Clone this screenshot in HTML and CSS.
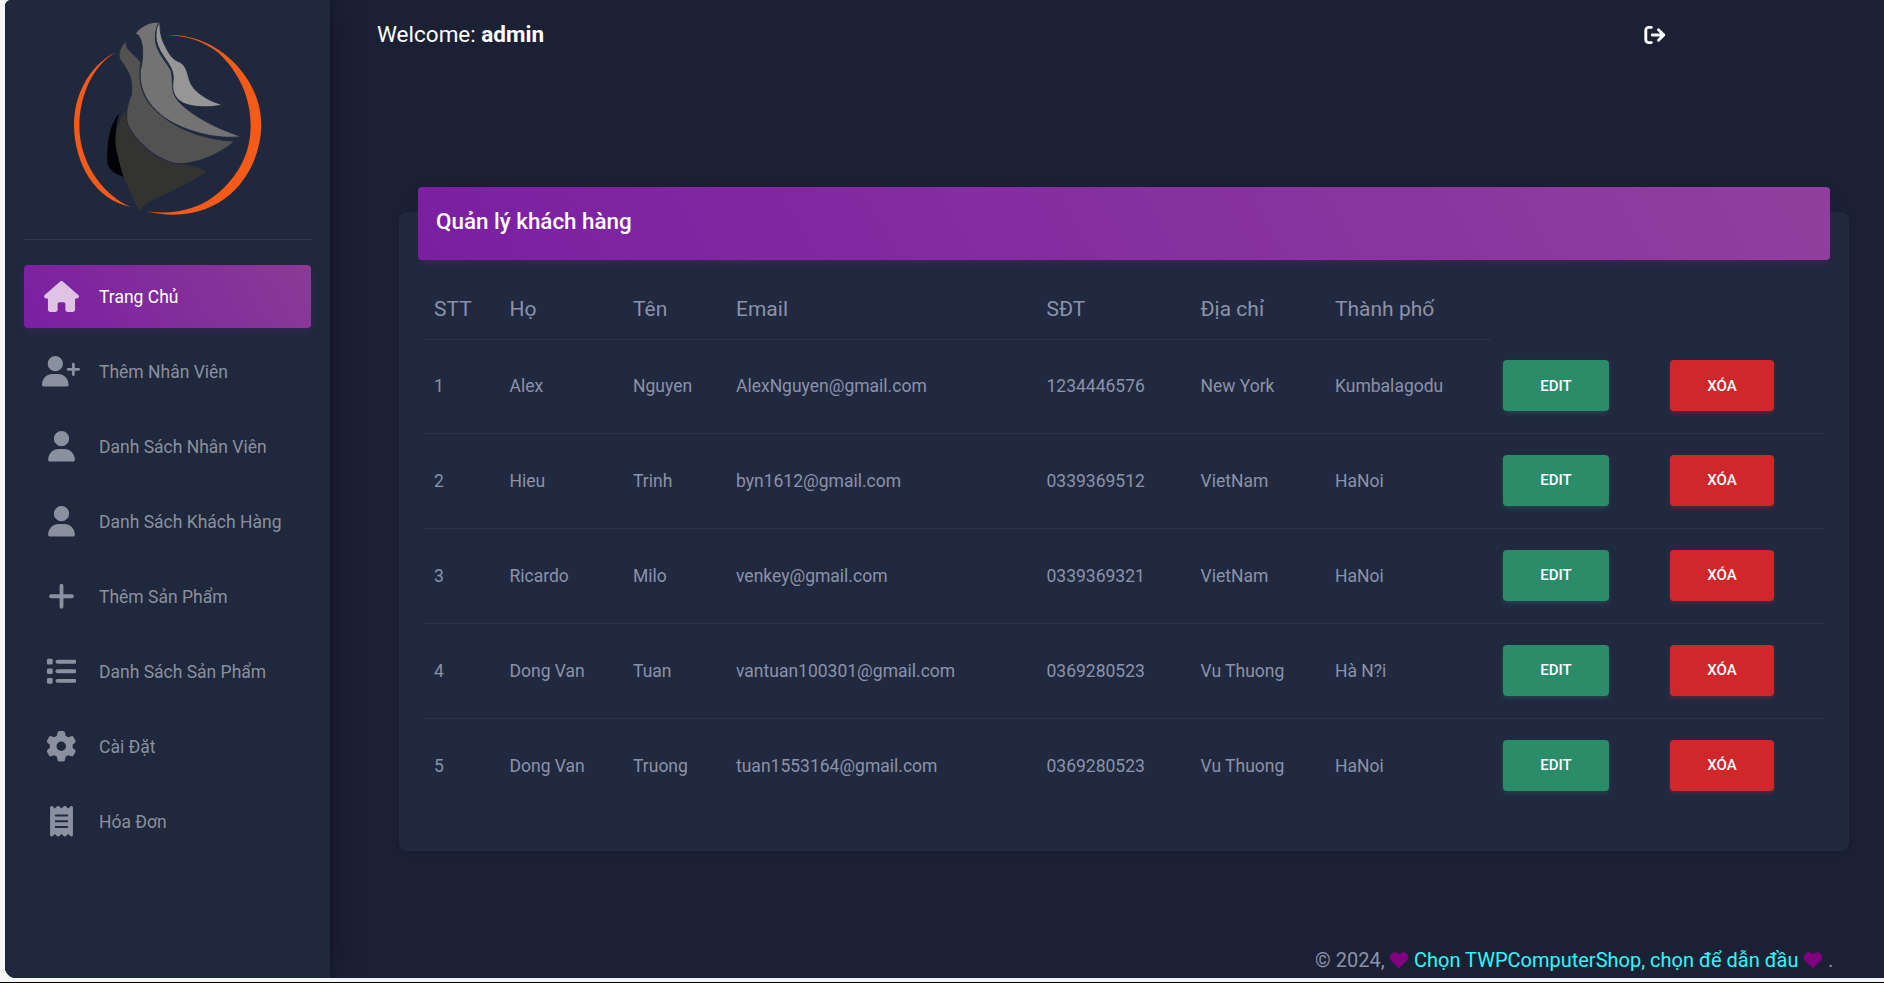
FILE: index.html
```html
<!DOCTYPE html>
<html lang="vi">
<head>
<meta charset="utf-8">
<title>Quản lý khách hàng</title>
<link rel="stylesheet" href="styles.css">
</head>
<body>
<div class="app">
  <aside class="sidebar">
    <div class="brand">
      <svg class="logo" viewBox="200 50 600 610">
        <path fill="#f45a18" d="M498 104C560 101 640 122 705 190C760 250 783 310 783 378C781 455 748 530 690 582C630 635 540 658 438 633C520 645 600 628 660 573C722 515 751 450 751 376C751 290 715 215 655 158C610 122 560 106 498 104Z"/>
        <path fill="#f45a18" d="M347 156C280 186 221 270 221 375C222 490 285 600 392 620C320 592 238 500 237 378C238 275 285 190 347 156Z"/>
        <path fill="#010205" d="M357 338C330 370 318 420 321 486C325 510 345 522 369 530L347 440C343 400 348 370 357 338Z"/>
        <path fill="#333332" d="M372 330C345 385 340 420 352 465C365 530 390 575 416 631C430 615 445 606 470 593C510 573 570 548 618 515C595 500 575 494 530 490C460 480 385 405 378 355Z"/>
        <path fill="#525252" stroke="#242b40" stroke-width="3" d="M376 122L380 142C395 162 412 170 421 187C415 235 422 270 440 300C475 350 560 415 702 423C660 460 590 492 530 490C460 478 395 410 380 365C375 335 385 300 393 285C398 240 388 215 362 182C350 165 357 145 376 122Z"/>
        <path fill="#737373" stroke="#242b40" stroke-width="3" d="M405 100C420 78 450 63 477 66C465 85 462 110 468 135C477 165 498 185 512 210C520 240 510 275 532 300C570 345 650 385 724 409C650 418 560 395 500 357C445 320 415 270 420 210C432 165 428 120 413 104Z"/>
        <path fill="#969696" stroke="#242b40" stroke-width="3" d="M479 66C478 90 482 115 495 138C508 165 520 180 540 186C575 210 550 250 605 285C625 300 645 306 667 314C630 322 580 322 550 309C515 290 515 265 519 235C520 190 478 170 468 120C465 95 469 75 479 66Z"/>
      </svg>
    </div>
    <nav class="menu">
      <a class="item active"><span class="ico"><svg viewBox="0 0 576 512" width="35" height="31"><path d="M575.8 255.5c0 18-15 32.1-32 32.1h-32l.7 160.2c0 2.7-.2 5.4-.5 8.1V472c0 22.1-17.9 40-40 40H456c-1.100 0-2.200 0-3.300-.1c-1.400 .1-2.800 .1-4.200 .1H416 392c-22.100 0-40-17.900-40-40V448 384c0-17.700-14.300-32-32-32H256c-17.700 0-32 14.300-32 32v64 24c0 22.100-17.900 40-40 40H160 128.100c-1.500 0-3-.1-4.500-.2c-1.200 .1-2.400 .2-3.600 .2H104c-22.100 0-40-17.900-40-40V360c0-.9 0-1.900 .1-2.800V287.600H32c-18 0-32-14-32-32.100c0-9 3-17 10-24L266.400 8c7-7 15-8 22-8s15 2 21 7L564.800 231.500c8 7 12 15 11 24z"/></svg></span><span>Trang Chủ</span></a>
      <a class="item"><span class="ico"><svg viewBox="0 0 640 512" width="38" height="30.500"><path d="M96 128a128 128 0 1 1 256 0A128 128 0 1 1 96 128zM0 482.300C0 383.800 79.800 304 178.300 304h91.400C368.200 304 448 383.800 448 482.300c0 16.400-13.300 29.700-29.700 29.700H29.700C13.300 512 0 498.700 0 482.300zM504 312V248H440c-13.300 0-24-10.700-24-24s10.700-24 24-24h64V136c0-13.300 10.700-24 24-24s24 10.700 24 24v64h64c13.300 0 24 10.700 24 24s-10.700 24-24 24H552v64c0 13.300-10.700 24-24 24s-24-10.700-24-24z"/></svg></span><span>Thêm Nhân Viên</span></a>
      <a class="item"><span class="ico"><svg viewBox="0 0 448 512" width="27" height="30.500"><path d="M224 256A128 128 0 1 0 224 0a128 128 0 1 0 0 256zm-45.700 48C79.800 304 0 383.800 0 482.300C0 498.700 13.300 512 29.700 512H418.300c16.400 0 29.700-13.300 29.700-29.700C448 383.800 368.200 304 269.700 304H178.300z"/></svg></span><span>Danh Sách Nhân Viên</span></a>
      <a class="item"><span class="ico"><svg viewBox="0 0 448 512" width="27" height="30.500"><path d="M224 256A128 128 0 1 0 224 0a128 128 0 1 0 0 256zm-45.700 48C79.800 304 0 383.800 0 482.300C0 498.700 13.300 512 29.700 512H418.300c16.400 0 29.700-13.300 29.700-29.700C448 383.800 368.200 304 269.700 304H178.300z"/></svg></span><span>Danh Sách Khách Hàng</span></a>
      <a class="item"><span class="ico"><svg viewBox="0 0 448 512" width="27" height="30.500"><path d="M256 80c0-17.700-14.300-32-32-32s-32 14.300-32 32V224H48c-17.700 0-32 14.300-32 32s14.300 32 32 32H192V432c0 17.700 14.300 32 32 32s32-14.300 32-32V288H400c17.700 0 32-14.300 32-32s-14.300-32-32-32H256V80z"/></svg></span><span>Thêm Sản Phẩm</span></a>
      <a class="item"><span class="ico"><svg viewBox="0 0 512 512" width="30.500" height="30.500"><rect x="16" y="48" width="96" height="96" rx="24"/><rect x="16" y="208" width="96" height="96" rx="24"/><rect x="16" y="368" width="96" height="96" rx="24"/><rect x="160" y="64" width="352" height="64" rx="32"/><rect x="160" y="224" width="352" height="64" rx="32"/><rect x="160" y="384" width="352" height="64" rx="32"/></svg></span><span>Danh Sách Sản Phẩm</span></a>
      <a class="item"><span class="ico"><svg viewBox="0 0 512 512" width="30.500" height="30.500"><path d="M495.900 166.600c3.200 8.700 .5 18.400-6.400 24.600l-43.300 39.400c1.100 8.300 1.700 16.800 1.700 25.400s-.6 17.100-1.700 25.400l43.300 39.400c6.900 6.200 9.600 15.900 6.400 24.600c-4.400 11.900-9.700 23.300-15.800 34.300l-4.700 8.100c-6.600 11-14 21.400-22.100 31.200c-5.900 7.200-15.700 9.600-24.500 6.800l-55.700-17.700c-13.400 10.300-28.200 18.900-44 25.400l-12.500 57.100c-2 9.100-9 16.300-18.200 17.800c-13.800 2.300-28 3.500-42.500 3.500s-28.700-1.200-42.500-3.500c-9.200-1.500-16.200-8.700-18.200-17.800l-12.500-57.100c-15.800-6.500-30.600-15.100-44-25.400L83.100 425.900c-8.800 2.800-18.600 .3-24.500-6.800c-8.100-9.800-15.500-20.200-22.100-31.200l-4.700-8.100c-6.100-11-11.400-22.400-15.800-34.300c-3.200-8.700-.5-18.400 6.400-24.600l43.300-39.400C64.600 273.100 64 264.600 64 256s.6-17.100 1.700-25.400L22.400 191.200c-6.900-6.200-9.600-15.900-6.400-24.600c4.400-11.900 9.700-23.300 15.800-34.300l4.700-8.100c6.600-11 14-21.400 22.100-31.200c5.900-7.200 15.700-9.600 24.500-6.800l55.700 17.700c13.400-10.300 28.200-18.900 44-25.400l12.500-57.100c2-9.100 9-16.300 18.200-17.800C227.300 1.200 241.500 0 256 0s28.700 1.200 42.500 3.500c9.200 1.500 16.200 8.700 18.200 17.800l12.500 57.100c15.800 6.500 30.600 15.100 44 25.400l55.700-17.700c8.800-2.800 18.600-.3 24.500 6.800c8.100 9.800 15.500 20.200 22.100 31.200l4.700 8.100c6.100 11 11.400 22.400 15.800 34.300zM256 336a80 80 0 1 0 0-160 80 80 0 1 0 0 160z"/></svg></span><span>Cài Đặt</span></a>
      <a class="item"><span class="ico"><svg viewBox="0 0 384 512" width="23" height="30.500"><path d="M14 2.200C22.500-1.700 32.500-.3 39.600 5.800L80 40.400 120.400 5.800c9-7.700 22.300-7.700 31.200 0L192 40.400 232.400 5.800c9-7.700 22.300-7.700 31.200 0L304 40.400 344.400 5.800c7.100-6.100 17.100-7.500 25.600-3.600s14 12.400 14 21.800V488c0 9.400-5.500 17.900-14 21.800s-18.500 2.500-25.600-3.600L304 471.600l-40.400 34.600c-9 7.700-22.300 7.700-31.200 0L192 471.600l-40.400 34.600c-9 7.700-22.300 7.700-31.200 0L80 471.600 39.600 506.200c-7.100 6.100-17.100 7.500-25.600 3.600S0 497.400 0 488V24C0 14.600 5.500 6.100 14 2.200zM96 144c-8.800 0-16 7.200-16 16s7.200 16 16 16H288c8.800 0 16-7.200 16-16s-7.200-16-16-16H96zM80 352c0 8.800 7.200 16 16 16H288c8.800 0 16-7.200 16-16s-7.200-16-16-16H96c-8.800 0-16 7.200-16 16zM96 240c-8.800 0-16 7.200-16 16s7.200 16 16 16H288c8.800 0 16-7.200 16-16s-7.200-16-16-16H96z"/></svg></span><span>Hóa Đơn</span></a>
    </nav>
  </aside>

  <main class="main">
    <header class="topbar">
      <div class="welcome">Welcome: <b>admin</b></div>
      <a class="logout"><svg viewBox="0 0 22 20" width="22" height="20"><path fill="none" stroke="#fff" stroke-width="2.900" stroke-linecap="round" stroke-linejoin="round" d="M7.300 2.400H4.600a2.800 2.800 0 0 0-2.800 2.800v9.600a2.800 2.800 0 0 0 2.800 2.800h2.700M8.300 10h11.500M14.500 4.800 19.800 10l-5.300 5.200"/></svg></a>
    </header>

    <section class="card">
      <h4 class="card-header">Quản lý khách hàng</h4>
      <table class="table">
        <colgroup><col class="c1"><col class="c2"><col class="c3"><col class="c4"><col class="c5"><col class="c6"><col class="c7"><col class="c8"><col class="c9"></colgroup>
        <thead><tr><th>STT</th><th>Họ</th><th>Tên</th><th>Email</th><th>SĐT</th><th>Địa chỉ</th><th>Thành phố</th></tr></thead>
        <tbody>
          <tr><td>1</td><td>Alex</td><td>Nguyen</td><td>AlexNguyen@gmail.com</td><td>1234446576</td><td>New York</td><td>Kumbalagodu</td><td><a class="btn edit">EDIT</a></td><td><a class="btn del">XÓA</a></td></tr>
          <tr><td>2</td><td>Hieu</td><td>Trinh</td><td>byn1612@gmail.com</td><td>0339369512</td><td>VietNam</td><td>HaNoi</td><td><a class="btn edit">EDIT</a></td><td><a class="btn del">XÓA</a></td></tr>
          <tr><td>3</td><td>Ricardo</td><td>Milo</td><td>venkey@gmail.com</td><td>0339369321</td><td>VietNam</td><td>HaNoi</td><td><a class="btn edit">EDIT</a></td><td><a class="btn del">XÓA</a></td></tr>
          <tr><td>4</td><td>Dong Van</td><td>Tuan</td><td>vantuan100301@gmail.com</td><td>0369280523</td><td>Vu Thuong</td><td>Hà N?i</td><td><a class="btn edit">EDIT</a></td><td><a class="btn del">XÓA</a></td></tr>
          <tr><td>5</td><td>Dong Van</td><td>Truong</td><td>tuan1553164@gmail.com</td><td>0369280523</td><td>Vu Thuong</td><td>HaNoi</td><td><a class="btn edit">EDIT</a></td><td><a class="btn del">XÓA</a></td></tr>
        </tbody>
      </table>
    </section>

    <footer class="footer">
      <span class="copy">© 2024,</span>
      <svg class="heart" viewBox="0 0 20 18"><path d="M10 17.500 1.700 9.300C-.2 7.300-.2 3.900 1.600 2 3.800-.3 7.600-.3 9.500 1.900L10 2.500l.5-.6C12.400-.3 16.200-.3 18.400 2c1.800 1.900 1.800 5.300-.1 7.300z"/></svg>
      <a class="slogan">Chọn TWPComputerShop, chọn để dẫn đầu</a>
      <svg class="heart" viewBox="0 0 20 18"><path d="M10 17.500 1.700 9.300C-.2 7.300-.2 3.900 1.600 2 3.800-.3 7.600-.3 9.500 1.900L10 2.500l.5-.6C12.400-.3 16.200-.3 18.400 2c1.800 1.900 1.800 5.300-.1 7.300z"/></svg>
      <span class="dot">.</span>
    </footer>
  </main>
</div>
</body>
</html>
```
FILE: styles.css
```css
* { box-sizing: border-box; }

body {
  margin: 0;
  height: 983px;
  padding-left: 5px;
  background: #f6f6f7;
  border-bottom: 1px solid #000;
  overflow: hidden;
  font-family: Roboto, "Noto Sans", sans-serif;
  color: #8b92a9;
}

.app {
  display: flex;
  height: 978px;
  background: #1b2035;
  border-radius: 6px 0 0 11px;
  overflow: hidden;
}

.sidebar {
  width: 325px;
  flex: none;
  background: #1f283c;
  box-shadow: 0 0 4px rgba(8, 10, 34, .5), 10px 0 30px -6px rgba(0, 0, 0, .3);
  z-index: 1;
}

.brand {
  height: 240px;
  margin: 0 18px 0 19px;
  padding: 16.700px 0 0 42.700px;
  border-bottom: 1px solid #30394f;
}
.logo { display: block; width: 200px; height: 203.300px; }

.menu {
  display: flex;
  flex-direction: column;
  gap: 12px;
  padding: 25px 19px 0;
}
.item {
  display: flex;
  align-items: center;
  gap: 19px;
  height: 63px;
  padding-left: 18px;
  border-radius: 4px;
  font-size: 17.500px;
  color: #8b909f;
}
.ico { display: flex; justify-content: center; width: 38px; }
.ico svg { fill: #8b90a1; }
.active {
  color: #fff;
  background: linear-gradient(60deg, #7b1fa2, #8b3a96);
  box-shadow: 0 4px 10px rgba(123, 31, 162, .22);
}
.active .ico svg { fill: #dec3e5; }

.main { flex: 1; display: flex; flex-direction: column; }

.topbar {
  display: flex;
  justify-content: space-between;
  align-items: center;
  height: 68px;
  padding: 0 218px 0 47px;
}
.welcome { font-size: 22.500px; color: #fff; }
.welcome b { font-weight: 700; }
.logout { display: flex; padding-top: 1px; }

.card {
  height: 639px;
  margin: 144px 35px 0 69px;
  padding: 0 19px;
  border-radius: 8px;
  background: #212940;
  box-shadow: 0 1px 5px rgba(0, 0, 0, .16);
}
.card-header {
  height: 73px;
  margin: -25px 0 0;
  padding: 19px 18px 0;
  border-radius: 4px;
  background: linear-gradient(60deg, #7b1fa2, #913f9e);
  box-shadow: 0 5px 14px rgba(0, 0, 0, .12), 0 5px 8px -3px rgba(156, 39, 176, .4);
  font-size: 22.400px;
  font-weight: 500;
  line-height: 30px;
  color: #fff;
}

.table {
  width: 1400px;
  margin: 18px 0 0 6px;
  table-layout: fixed;
  border-collapse: separate;
  border-spacing: 0;
}
.c1 { width: 75.500px; } .c2 { width: 123.500px; } .c3 { width: 103px; }
.c4 { width: 310.500px; } .c5 { width: 154px; } .c6 { width: 134.500px; }
.c7 { width: 166px; } .c8 { width: 167px; } .c9 { width: 166px; }
th, td { padding: 0 0 1px 10px; text-align: left; white-space: nowrap; }
th {
  height: 62px;
  padding-bottom: 0;
  border-bottom: 1px solid #2c3449;
  font-size: 21px;
  font-weight: 400;
}
td { height: 95px; border-bottom: 1px solid #2c3449; font-size: 17.500px; }
tbody tr:first-child td { height: 94px; }
tbody tr:last-child td { border-bottom-color: transparent; }

.btn {
  display: flex;
  justify-content: center;
  align-items: center;
  height: 51px;
  margin: 0 0 1px 2px;
  border-radius: 4px;
  font-size: 15px;
  font-weight: 500;
  color: #fff;
}
.edit { width: 106px; background: #2b8c6a; box-shadow: 0 2px 4px rgba(43, 140, 106, .3); }
.del { width: 104px; background: #d0282a; box-shadow: 0 2px 4px rgba(208, 40, 42, .3); }

.footer {
  display: flex;
  align-items: center;
  height: 36px;
  margin-top: auto;
  padding-left: 985px;
  font-size: 20px;
  white-space: nowrap;
}
.heart { flex: none; width: 20px; height: 17px; fill: #800080; }
.copy { width: 74px; }
.slogan { width: 383px; margin: 0 6px 0 5px; color: #2ef8f8; }
.dot { margin-left: 5px; }
```
